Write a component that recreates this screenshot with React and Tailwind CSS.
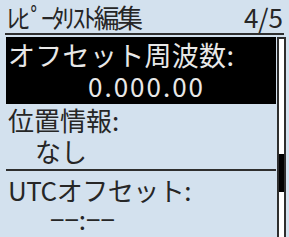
export default function App() {
  return (
    <div
      className="w-[289px] h-[237px] overflow-hidden bg-[#d3e1ee] text-[#262626]"
      style={{ fontFamily: '"Noto Sans CJK JP", "Noto Sans", sans-serif' }}
    >
      {/* Header */}
      <div className="mx-[5px] h-[35px] flex items-end justify-between border-b-2 border-[#2e2e2e]">
        <span className="text-[26px] leading-[32px] pl-[2px] tracking-[-2.5px]">ﾚﾋﾟｰﾀﾘｽﾄ編集</span>
        <span className="text-[26px] leading-[32px] pr-[1px]">4/5</span>
      </div>

      <div className="flex pl-[6px] pt-[2px]">
        {/* List */}
        <div className="w-[270px]">
          <div className="h-[67px] bg-black text-[#e8e8e8] pl-[2px]">
            <div className="text-[27px] leading-[36px] tracking-[0.3px]">オフセット周波数:</div>
            <div className="text-[26px] leading-[26px] pl-[80px] tracking-[2px]">0.000.00</div>
          </div>
          <div className="h-[67px] border-b-2 border-[#2e2e2e] pl-[2px]">
            <div className="text-[26px] leading-[32px]">位置情報:</div>
            <div className="text-[26px] leading-[30px] pl-[27px]">なし</div>
          </div>
          <div className="pl-[2px]">
            <div className="text-[26px] leading-[34px] pt-[2px] tracking-[-0.5px]">UTCオフセット:</div>
            <div className="text-[26px] leading-[24px] pl-[42px]">−−:−−</div>
          </div>
        </div>

        {/* Scrollbar */}
        <div className="ml-[1px] w-[9px] h-[220px] border-2 border-[#2e2e2e] bg-white pt-[115px]">
          <div className="h-[38px] bg-black" />
        </div>
      </div>
    </div>
  );
}
